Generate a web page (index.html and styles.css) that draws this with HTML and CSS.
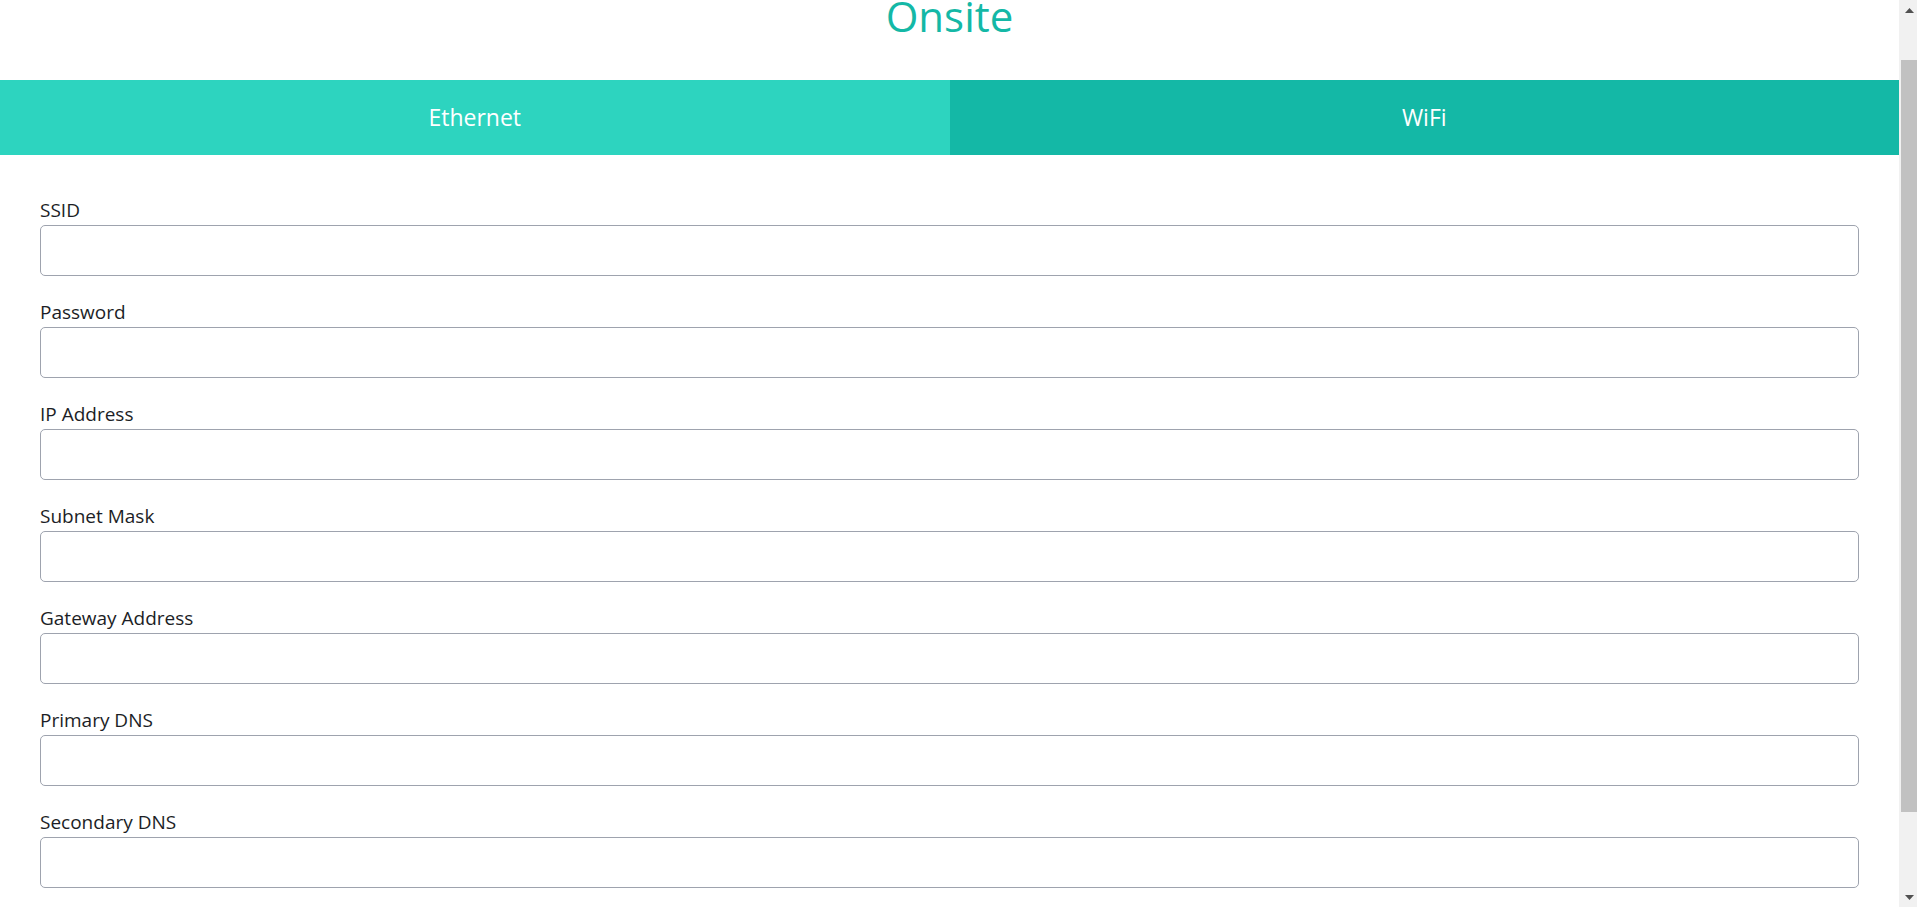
FILE: index.html
```html
<!DOCTYPE html>
<html lang="en">
<head>
<meta charset="utf-8">
<title>Onsite</title>
<link rel="stylesheet" href="styles.css">
</head>
<body>
<div class="page">
  <header class="header">
    <h1 class="title">Onsite</h1>
  </header>
  <nav class="tabs">
    <div class="tab tab-ethernet">Ethernet</div>
    <div class="tab tab-wifi">WiFi</div>
  </nav>
  <form class="form">
    <div class="field">
      <label class="label" for="ssid">SSID</label>
      <input class="input" id="ssid" type="text">
    </div>
    <div class="field">
      <label class="label" for="password">Password</label>
      <input class="input" id="password" type="password">
    </div>
    <div class="field">
      <label class="label" for="ip">IP Address</label>
      <input class="input" id="ip" type="text">
    </div>
    <div class="field">
      <label class="label" for="mask">Subnet Mask</label>
      <input class="input" id="mask" type="text">
    </div>
    <div class="field">
      <label class="label" for="gateway">Gateway Address</label>
      <input class="input" id="gateway" type="text">
    </div>
    <div class="field">
      <label class="label" for="dns1">Primary DNS</label>
      <input class="input" id="dns1" type="text">
    </div>
    <div class="field">
      <label class="label" for="dns2">Secondary DNS</label>
      <input class="input" id="dns2" type="text">
    </div>
  </form>
</div>
<div class="scrollbar" aria-hidden="true">
  <div class="sb-button sb-up">
    <svg width="9" height="5" viewBox="0 0 9 5"><polygon points="0,5 4.5,0 9,5" fill="#505050"/></svg>
  </div>
  <div class="sb-thumb"></div>
  <div class="sb-button sb-down">
    <svg width="9" height="5" viewBox="0 0 9 5"><polygon points="0,0 4.5,5 9,0" fill="#505050"/></svg>
  </div>
</div>
</body>
</html>
```

FILE: styles.css
```css
html, body {
  margin: 0;
  padding: 0;
  height: 100%;
}

body {
  display: flex;
  overflow: hidden;
  background: #ffffff;
  font-family: "Open Sans", "Noto Sans", "Liberation Sans", sans-serif;
}

.page {
  flex: 1;
  min-width: 0;
}

.header {
  height: 80px;
  text-align: center;
}

.title {
  margin: 0;
  font-size: 42px;
  line-height: 32px;
  font-weight: 400;
  color: #14b8a6;
}

.tabs {
  display: grid;
  grid-template-columns: 1fr 1fr;
  height: 75px;
}

.tab {
  color: #ffffff;
  font-size: 23px;
  line-height: 75px;
  text-align: center;
}

.tab-ethernet {
  background: #2dd4bf;
}

.tab-wifi {
  background: #14b8a6;
}

.form {
  padding: 40px 40px 0 40px;
}

.field {
  margin-bottom: 21px;
}

.label {
  display: block;
  font-size: 19px;
  line-height: 30px;
  color: #1c1e26;
}

.input {
  display: block;
  box-sizing: border-box;
  width: 100%;
  height: 51px;
  margin: 0;
  border: 1px solid #9ea3ae;
  border-radius: 5px;
  background: #ffffff;
  font: inherit;
  outline: none;
}

.scrollbar {
  width: 18px;
  height: 100%;
  background: #f1f1f1;
  display: flex;
  flex-direction: column;
}

.sb-button {
  height: 18px;
  display: flex;
  justify-content: center;
  padding-left: 2px;
}

.sb-up {
  align-items: flex-end;
  box-sizing: border-box;
  padding-bottom: 5px;
}

.sb-down {
  margin-top: auto;
  align-items: flex-start;
  box-sizing: border-box;
  padding-top: 6px;
}

.sb-thumb {
  margin-top: 42px;
  margin-left: 2px;
  height: 752px;
  background: #c1c1c1;
}
```
